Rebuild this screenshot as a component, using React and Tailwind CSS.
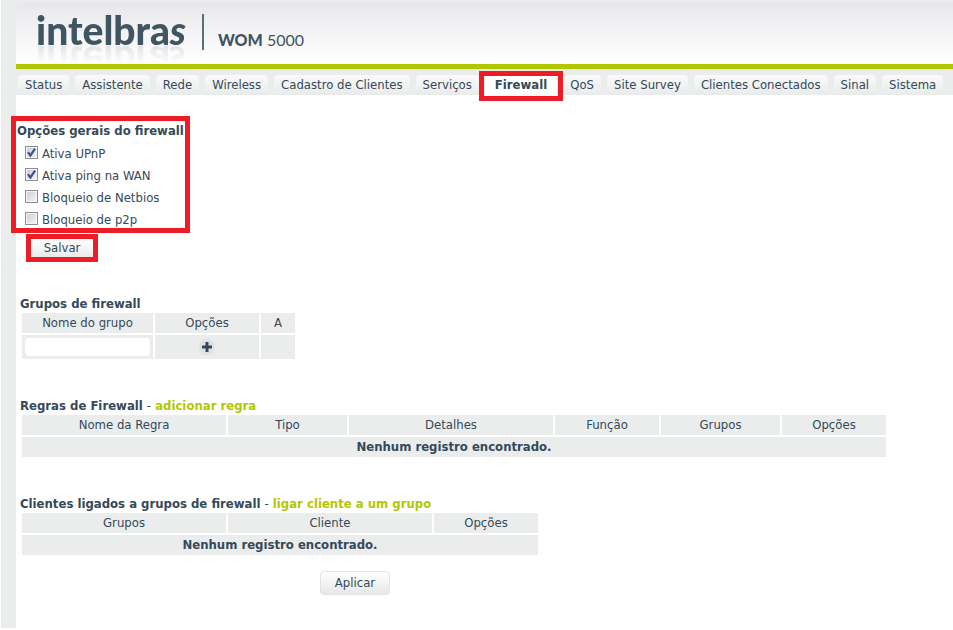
import { useState } from "react";

const TABS = [
  "Status", "Assistente", "Rede", "Wireless", "Cadastro de Clientes", "Serviços",
  "Firewall", "QoS", "Site Survey", "Clientes Conectados", "Sinal", "Sistema",
];

const OPTIONS = [
  { id: "upnp", label: "Ativa UPnP", on: true },
  { id: "ping", label: "Ativa ping na WAN", on: true },
  { id: "netbios", label: "Bloqueio de Netbios", on: false },
  { id: "p2p", label: "Bloqueio de p2p", on: false },
];

const RULE_COLS = [
  ["Nome da Regra", "w-[204px]"],
  ["Tipo", "w-[119px]"],
  ["Detalhes", "w-[204px]"],
  ["Função", "w-[104px]"],
  ["Grupos", "w-[119px]"],
  ["Opções", "w-[104px]"],
];

const CLIENT_COLS = [
  ["Grupos", "w-[204px]"],
  ["Cliente", "w-[204px]"],
  ["Opções", "w-[104px]"],
];

const Header = () => (
  <header className="mt-0.5 flex h-[62px] items-start overflow-hidden rounded-tl-md bg-linear-to-b from-[#e8e8ec] to-white pl-5">
    <div className="mt-2 text-[39px] leading-10 font-black text-[#3f5561] [font-family:Lato,sans-serif] [-webkit-box-reflect:below_-9px_linear-gradient(transparent_40%,rgba(0,0,0,0.15))]">
      intelbra<span className="italic">s</span>
    </div>
    <div className="mt-3 ml-4 h-9 w-0.5 bg-[#5b6f7b]" />
    <div className="mt-[26px] ml-3.5 text-[16px] leading-6 text-[#3f5561] [font-family:Lato,sans-serif]">
      <span className="font-black">WOM</span> 5000
    </div>
  </header>
);

const Tabs = ({ active, onSelect }) => (
  <nav className="flex gap-1.5 bg-[#ebedec] pt-1.5 pl-0.5">
    {TABS.map((tab) => (
      <button
        key={tab}
        type="button"
        onClick={() => onSelect(tab)}
        className={`relative h-5 shrink-0 rounded-t leading-5 whitespace-nowrap ${
          tab === active ? "bg-white px-2.5 font-bold" : "bg-linear-to-b from-[#fafafa] to-[#e9ebeb] px-[7px]"
        }`}
      >
        {tab}
        {tab === active && <span className="absolute -inset-x-1.5 -top-1 -bottom-1.5 z-10 border-5 border-[#ee1c25]" />}
      </button>
    ))}
  </nav>
);

const Check = ({ id, label, on }) => {
  const [checked, setChecked] = useState(on);
  return (
    <div className="flex h-[22px] items-center gap-1 pl-2">
      <span className="relative mb-1 size-[13px]">
        <input
          id={id}
          type="checkbox"
          checked={checked}
          onChange={() => setChecked(!checked)}
          className="block size-[13px] appearance-none border border-[#8e8f8f] bg-linear-to-br from-[#c9ced3] to-[#f6f6f6] shadow-[inset_0_0_0_1px_#f4f4f4]"
        />
        {checked && (
          <svg viewBox="0 0 13 13" className="pointer-events-none absolute inset-0">
            <path d="M3 6.2 5.4 9.6 10 2.6" fill="none" stroke="#3d4f93" strokeWidth="2.2" />
          </svg>
        )}
      </span>
      <label htmlFor={id}>{label}</label>
    </div>
  );
};

const Th = ({ width, children }) => <th className={`h-5 bg-[#ebedec] p-0 font-normal ${width}`}>{children}</th>;

const EmptyTable = ({ cols }) => (
  <table className="table-fixed border-separate border-spacing-0.5 text-center leading-5">
    <thead>
      <tr>
        {cols.map(([name, width]) => (
          <Th key={name} width={width}>{name}</Th>
        ))}
      </tr>
    </thead>
    <tbody>
      <tr>
        <td colSpan={cols.length} className="h-5 bg-[#ebedec] p-0 font-bold">Nenhum registro encontrado.</td>
      </tr>
    </tbody>
  </table>
);

const App = () => {
  const [active, setActive] = useState("Firewall");

  return (
    <div className="min-h-screen border-b-2 border-l border-white bg-[#ebedec] pl-[15px] text-[13px] leading-4 text-[#34495a] [font-family:'DejaVu_Sans_Condensed','DejaVu_Sans',sans-serif]">
      <div className="flow-root">
        <Header />
      </div>
      <div className="h-[5px] bg-[#b1c800]" />
      <Tabs active={active} onSelect={setActive} />

      <main className="bg-white pb-[33px] pl-1">
        <div className="pt-[21px]">
          <section className="-ml-[9px] w-[179px] border-5 border-[#ee1c25] pl-px">
            <h2 className="pt-0.5 pb-1 font-bold whitespace-nowrap">Opções gerais do firewall</h2>
            <div className="-mb-[3px]">
              {OPTIONS.map((o) => (
                <Check key={o.id} {...o} />
              ))}
            </div>
          </section>
          <button type="button" className="mt-px ml-1.5 block h-7 w-[72px] border-5 border-[#ee1c25] bg-linear-to-b from-white to-[#e9ebeb]">
            Salvar
          </button>
        </div>

        <section className="pt-[34px]">
          <h2 className="h-[15px] font-bold">Grupos de firewall</h2>
          <table className="border-separate border-spacing-0.5 text-center leading-5">
            <thead>
              <tr>
                <Th width="w-[131px]"><label htmlFor="grupo">Nome do grupo</label></Th>
                <Th width="w-[104px]">Opções</Th>
                <Th width="w-[34px]">A</Th>
              </tr>
            </thead>
            <tbody>
              <tr>
                <td className="h-6 bg-[#ebedec] p-0">
                  <input id="grupo" type="text" className="mx-auto block h-[18px] w-[125px] rounded bg-white px-1" />
                </td>
                <td className="h-6 bg-[#ebedec] p-0">
                  <button type="button" aria-label="Adicionar grupo" className="mx-auto block size-4 rounded-full bg-[#e0e2e3]">
                    <svg viewBox="0 0 16 16" className="size-4">
                      <path d="M8 3v10M3 8h10" stroke="#34495a" strokeWidth="3" />
                    </svg>
                  </button>
                </td>
                <td className="h-6 bg-[#ebedec] p-0" />
              </tr>
            </tbody>
          </table>
        </section>

        <section className="pt-[37px]">
          <h2 className="h-[15px] font-bold">
            Regras de Firewall <span className="font-normal">-</span> <a href="#regra" className="text-[#b1c800]">adicionar regra</a>
          </h2>
          <EmptyTable cols={RULE_COLS} />
        </section>

        <section className="pt-[37px]">
          <h2 className="h-[15px] font-bold">
            Clientes ligados a grupos de firewall <span className="font-normal">-</span> <a href="#cliente" className="text-[#b1c800]">ligar cliente a um grupo</a>
          </h2>
          <EmptyTable cols={CLIENT_COLS} />
        </section>

        <button
          type="button"
          className="mt-3.5 ml-[300px] block h-6 w-[70px] rounded border border-[#e3e5e5] bg-linear-to-b from-white to-[#e6e8e8]"
        >
          Aplicar
        </button>
      </main>
    </div>
  );
};

export default App;
